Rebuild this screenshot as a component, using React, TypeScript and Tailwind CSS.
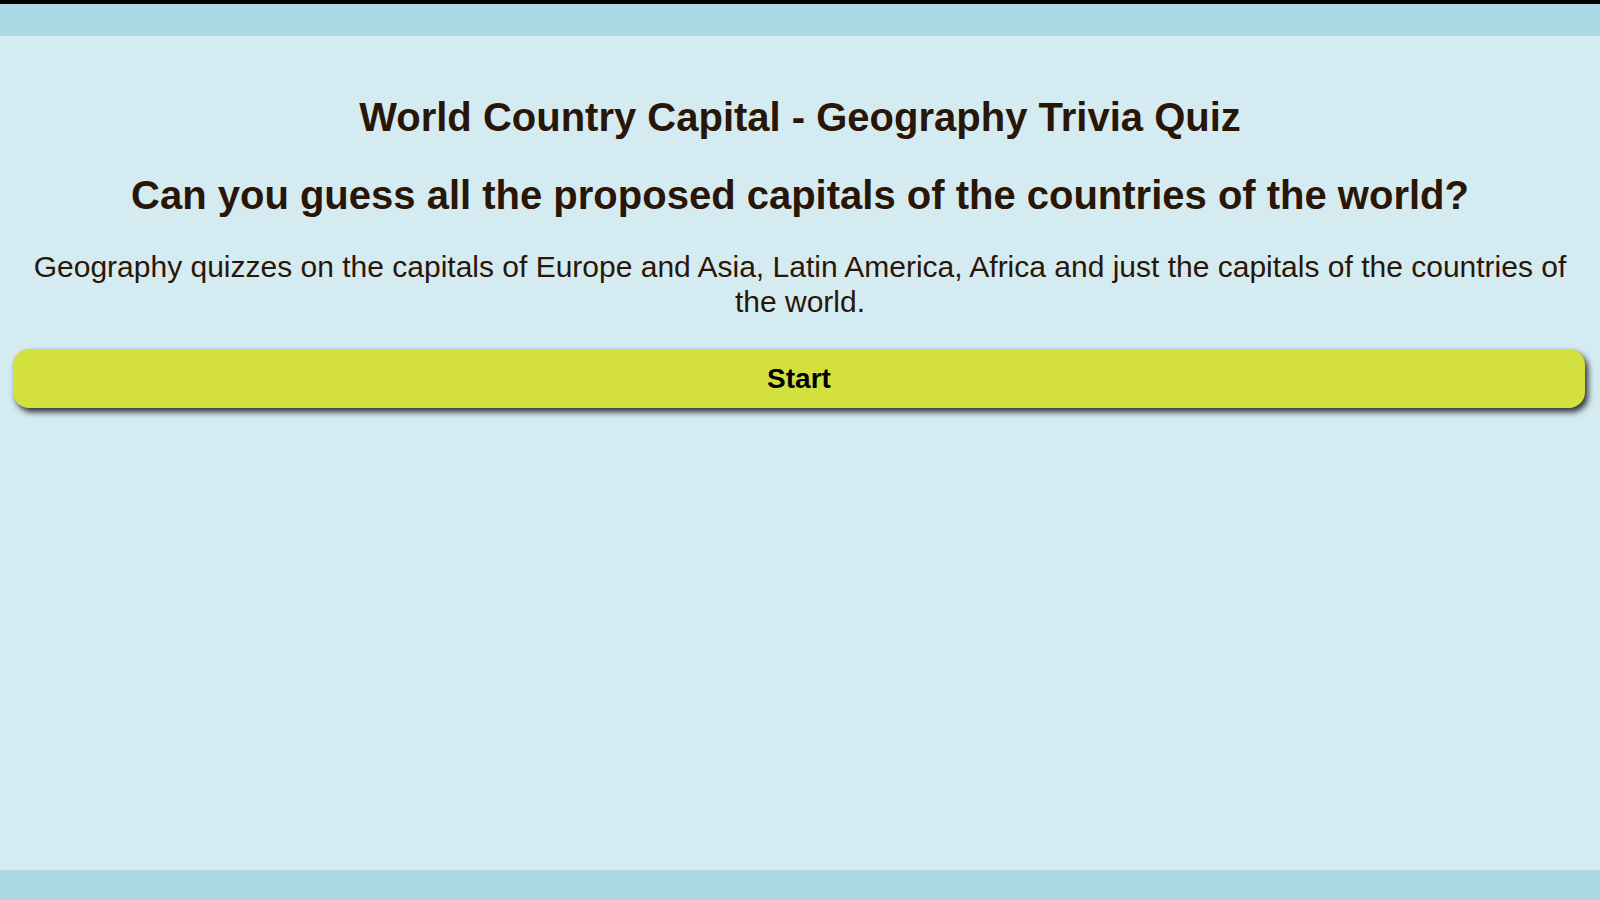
import React from "react";

export default function App() {
  return (
    <div
      className="min-h-[900px] h-[900px] flex flex-col bg-[#d5ebf2] text-[#2a1606]"
      style={{ fontFamily: '"Liberation Sans", Arial, sans-serif' }}
    >
      <header className="h-[36px] shrink-0 border-t-4 border-black bg-[#add8e6]" />

      <main className="flex-1 flex flex-col">
        <h1 className="mt-[58px] text-center text-[40px] leading-[46px] font-bold">
          World Country Capital - Geography Trivia Quiz
        </h1>
        <h2 className="mt-[32px] text-center text-[40px] leading-[46px] font-bold">
          Can you guess all the proposed capitals of the countries of the world?
        </h2>
        <p className="mt-[32px] px-[30px] text-center text-[30px] leading-[34.5px]">
          Geography quizzes on the capitals of Europe and Asia, Latin America, Africa and just the capitals of the countries of the world.
        </p>
        <button
          type="button"
          className="mt-[30px] ml-[13px] mr-[15px] h-[59px] rounded-[16px] bg-[#d3e03e] text-black text-[28px] font-bold shadow-[3px_4px_6px_rgba(0,0,0,0.8)]"
        >
          Start
        </button>
      </main>

      <footer className="h-[30px] shrink-0 bg-[#add8e6]" />
    </div>
  );
}
